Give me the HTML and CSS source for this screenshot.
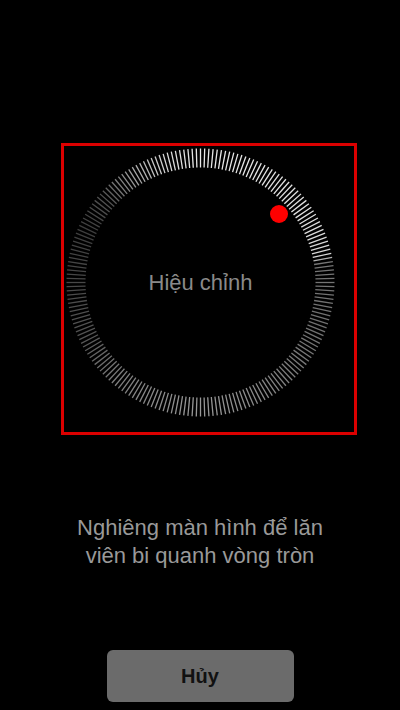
FILE: index.html
```html
<!DOCTYPE html>
<html lang="vi">
<head>
  <meta charset="UTF-8" />
  <meta name="viewport" content="width=device-width, initial-scale=1.0" />
  <title>La bàn</title>
  <link rel="stylesheet" href="styles.css">
</head>
<body>
  <div class="screen">
    <div class="frame">
      <div class="dial">
        <svg class="ticks" id="ticks" width="269" height="269" viewBox="0 0 269 269"></svg>
        <div class="ball"></div>
        <div class="label">Hiệu chỉnh</div>
      </div>
    </div>
    <p class="hint">Nghiêng màn hình để lăn<br>viên bi quanh vòng tròn</p>
    <button class="cancel">Hủy</button>
  </div>
  <script src="script.js"></script>
</body>
</html>
```

FILE: styles.css
```css
* {
  box-sizing: border-box;
}
body {
  margin: 0;
  background: #000;
  font-family: 'Liberation Sans', Arial, sans-serif;
  color: #fff;
}
.screen {
  width: 400px;
  height: 710px;
  display: flex;
  flex-direction: column;
  align-items: center;
  overflow: hidden;
}
.frame {
  align-self: flex-start;
  margin: 143px 0 0 61px;
  width: 296px;
  height: 292px;
  border: 3px solid #dc0000;
  padding: 2px 0 0 2px;
}
.dial {
  position: relative;
  width: 269px;
  height: 269px;
  display: flex;
  align-items: center;
  justify-content: center;
}
.ticks {
  position: absolute;
  left: 0;
  top: 0;
}
.label {
  position: relative;
  font-size: 22px;
  color: #8a8a8a;
}
.ball {
  position: absolute;
  left: 204px;
  top: 57px;
  width: 18px;
  height: 18px;
  border-radius: 50%;
  background: #ff0000;
}
.hint {
  margin: 79px 0 0;
  font-size: 22px;
  line-height: 28px;
  text-align: center;
  color: #999;
}
.cancel {
  margin-top: 80px;
  width: 187px;
  height: 52px;
  border: none;
  border-radius: 6px;
  background: #6b6b6b;
  color: #111;
  font-family: inherit;
  font-size: 20px;
  font-weight: bold;
}
```

FILE: script.js
```js
// draw the calibration ring: 200 spokes, shade depends on angle (0 = top, clockwise)
const svg = document.getElementById('ticks');
const NS = 'http://www.w3.org/2000/svg';
const COUNT = 200;
const cx = 134.5, cy = 134.5;
const outer = 134, inner = 115;

const stops = [
  [0, 232], [60, 224], [78, 214], [81, 118], [110, 112], [150, 135],
  [180, 152], [220, 128], [245, 84], [270, 72], [295, 62], [312, 84],
  [330, 170], [345, 218], [360, 232]
];

const shadeAt = (deg) => {
  for (let i = 1; i < stops.length; i++) {
    const [a1, v1] = stops[i - 1];
    const [a2, v2] = stops[i];
    if (deg <= a2) {
      const t = (deg - a1) / (a2 - a1);
      return Math.round(v1 + (v2 - v1) * t);
    }
  }
  return stops[0][1];
};

for (let i = 0; i < COUNT; i++) {
  const deg = (i * 360) / COUNT;
  const rad = (deg * Math.PI) / 180;
  const sx = Math.sin(rad), sy = -Math.cos(rad);
  const v = shadeAt(deg);
  const line = document.createElementNS(NS, 'line');
  line.setAttribute('x1', (cx + sx * inner).toFixed(2));
  line.setAttribute('y1', (cy + sy * inner).toFixed(2));
  line.setAttribute('x2', (cx + sx * outer).toFixed(2));
  line.setAttribute('y2', (cy + sy * outer).toFixed(2));
  line.setAttribute('stroke', `rgb(${v},${v},${v})`);
  line.setAttribute('stroke-width', '1.3');
  svg.appendChild(line);
}
```
